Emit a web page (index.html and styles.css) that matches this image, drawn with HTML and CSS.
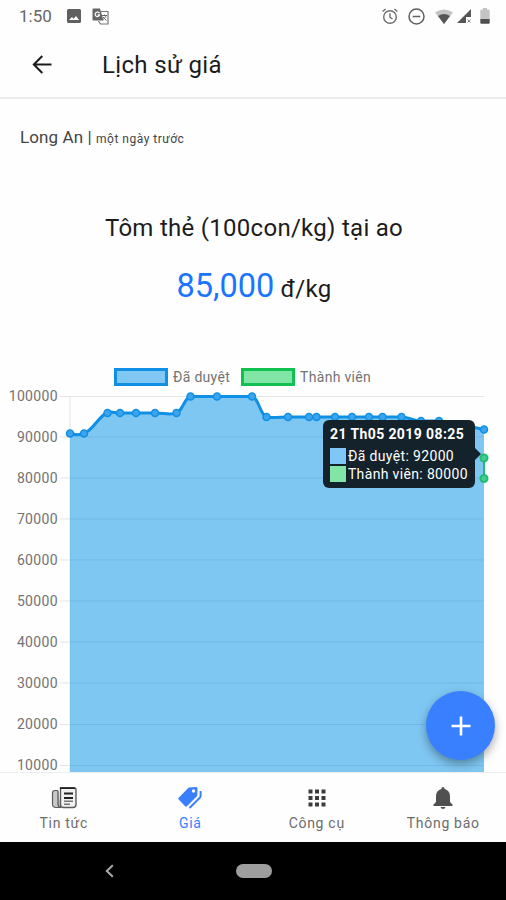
FILE: index.html
```html
<!DOCTYPE html>
<html lang="vi">
<head>
	<meta charset="utf-8">
	<title>Lịch sử giá</title>
	<link rel="stylesheet" href="styles.css">
</head>
<body>
	<div class="status-bar">
		<span class="clock">1:50</span>
		<svg class="icon-image" width="14" height="14" viewBox="0 0 14 14">
			<path fill="#606060" fill-rule="evenodd" d="M1.500 0h11A1.500 1.500 0 0 1 14 1.500v11a1.500 1.500 0 0 1-1.500 1.500h-11A1.500 1.500 0 0 1 0 12.500v-11A1.500 1.500 0 0 1 1.500 0zM2 11h10L9 7 6.700 9.700 5 8z"/>
		</svg>
		<svg class="icon-translate" width="17" height="17" viewBox="0 0 17 17">
			<path fill="none" stroke="#777" stroke-width="1.200" d="M9 3.500h7v12.500H8.500l-2-3"/>
			<path fill="#666" d="M1.500.5h6.500l3.500 12H1.500a1 1 0 0 1-1-1v-10a1 1 0 0 1 1-1z"/>
			<path fill="none" stroke="#fff" stroke-width="1.200" d="M7.500 5.200A2.300 2.300 0 1 0 7.300 7.700V6.800H5.500"/>
			<path fill="none" stroke="#666" d="M10 7.500h5M12.500 6.500v1M14 7.500c-.5 2-2 3.500-3.500 4.500M11 9l3.500 3.500"/>
		</svg>
		<div class="status-right">
			<svg width="16" height="17" viewBox="0 0 16 17" fill="none" stroke="#6e6e6e" stroke-width="1.400">
				<circle cx="8" cy="9" r="6.300"/>
				<path d="M8 5.300V9.300l2.500 1.700M.6 3.500l3-2.500M15.400 3.500l-3-2.500"/>
			</svg>
			<svg class="icon-dnd" width="17" height="17" viewBox="0 0 17 17" fill="none" stroke="#606060" stroke-width="1.500">
				<circle cx="8.500" cy="8.500" r="7.500"/>
				<path d="M4.700 8.500h7.600"/>
			</svg>
			<svg class="icon-wifi" width="18" height="15" viewBox="0 0 18 15">
				<path fill="#c4c4c4" d="M0 3.500Q9-2.500 18 3.500L9 15z"/>
				<path fill="#555" d="M3 7Q9 3 15 7L9 15z"/>
			</svg>
			<svg class="icon-signal" width="14" height="14" viewBox="0 0 14 14">
				<path fill="#555" d="M14 0v8H9v6H0z"/>
				<path fill="none" stroke="#888" d="M10.500 10.500l3 3M13.500 10.500l-3 3"/>
			</svg>
			<svg class="icon-battery" width="10" height="16" viewBox="0 0 10 16">
				<path fill="#c4c4c4" d="M3 0h4v1.500h1.500A1.200 1.200 0 0 1 9.700 2.700V11H.3V2.700A1.200 1.200 0 0 1 1.500 1.500H3z"/>
				<path fill="#505050" d="M.3 11h9.400v3.800a1 1 0 0 1-1 1H1.300a1 1 0 0 1-1-1z"/>
			</svg>
		</div>
	</div>

	<header class="toolbar">
		<svg width="20" height="19" viewBox="0 0 20 19" fill="none" stroke="#1c1c1c" stroke-width="2">
			<path d="M19.500 9.500H2M10.300 1L1.800 9.500l8.500 8.500"/>
		</svg>
		<h1>Lịch sử giá</h1>
	</header>

	<main class="content">
		<p class="place">Long An | <small>một ngày trước</small></p>
		<h2>Tôm thẻ (100con/kg) tại ao</h2>
		<p class="price"><strong>85,000</strong> đ/kg</p>

		<div class="legend">
			<i class="box approved"></i><span class="legend-approved">Đã duyệt</span>
			<i class="box member"></i><span class="legend-member">Thành viên</span>
		</div>

		<div class="chart">
			<svg width="506" height="386" viewBox="0 0 506 386">
				<g class="grid">
					<path d="M60 9.500H484M60 50H484M60 91H484M60 132H484M60 173H484M60 214H484M60 255H484M60 296H484M60 337.500H484M60 378.500H484M70 9V386"/>
				</g>
				<path class="area" d="M70 46.500C75 48 80 48 84 46.500C93 43 99 29 107.500 25.500C111 24 115 26 120 26H155C163 26 171 28.500 176.500 26C183 23 184 12 190 9.500H252C259 11 260 28 266.500 30C272 31.500 281 30 288 30H401C409 30 413 34 421 34H439C455 35 470 40 484 42.500V386H70z"/>
				<path class="line" d="M70 46.500C75 48 80 48 84 46.500C93 43 99 29 107.500 25.500C111 24 115 26 120 26H155C163 26 171 28.500 176.500 26C183 23 184 12 190 9.500H252C259 11 260 28 266.500 30C272 31.500 281 30 288 30H401C409 30 413 34 421 34H439C455 35 470 40 484 42.500"/>
				<g class="points">
					<circle cx="70" cy="46.500" r="3.500"/>
					<circle cx="84" cy="46.500" r="3.500"/>
					<circle cx="107.500" cy="26" r="3.500"/>
					<circle cx="120" cy="26" r="3.500"/>
					<circle cx="136" cy="26" r="3.500"/>
					<circle cx="155" cy="26" r="3.500"/>
					<circle cx="176.500" cy="26" r="3.500"/>
					<circle cx="190.500" cy="9.500" r="3.500"/>
					<circle cx="217" cy="9.500" r="3.500"/>
					<circle cx="252" cy="9.500" r="3.500"/>
					<circle cx="266.500" cy="30" r="3.500"/>
					<circle cx="288" cy="30" r="3.500"/>
					<circle cx="309" cy="30" r="3.500"/>
					<circle cx="316.500" cy="30" r="3.500"/>
					<circle cx="335" cy="30" r="3.500"/>
					<circle cx="352" cy="30" r="3.500"/>
					<circle cx="369" cy="30" r="3.500"/>
					<circle cx="382.500" cy="30" r="3.500"/>
					<circle cx="401.500" cy="30" r="3.500"/>
					<circle cx="421" cy="34" r="3.500"/>
					<circle cx="439" cy="34" r="3.500"/>
					<circle cx="484" cy="42.500" r="3.500"/>
				</g>
				<g class="member-points">
					<path d="M484 71V91.500"/>
					<circle cx="484" cy="71" r="3.500"/>
					<circle cx="484" cy="91.500" r="3.500"/>
				</g>
				<g class="labels">
					<text x="58" y="14">100000</text>
					<text x="58" y="55">90000</text>
					<text x="58" y="96">80000</text>
					<text x="58" y="137">70000</text>
					<text x="58" y="178">60000</text>
					<text x="58" y="219">50000</text>
					<text x="58" y="260">40000</text>
					<text x="58" y="301">30000</text>
					<text x="58" y="342">20000</text>
					<text x="58" y="383">10000</text>
				</g>
			</svg>
			<div class="tooltip">
				<b>21 Th05 2019 08:25</b>
				<div><i class="blue"></i><span>Đã duyệt: 92000</span></div>
				<div><i class="green"></i><span>Thành viên: 80000</span></div>
			</div>
		</div>
		<button class="add" aria-label="Thêm">
			<svg width="20" height="20" viewBox="0 0 20 20"><path stroke="#fff" stroke-width="2.600" d="M10 .5v19M.5 10h19"/></svg>
		</button>
	</main>

	<nav class="tabs">
		<a class="tab">
			<svg width="26" height="22" viewBox="0 0 26 22" fill="none" stroke="#5c5c5c">
				<path fill="#c9c9c9" stroke-width="1.200" d="M7 3.500H4Q1.500 3.500 1.500 6v11Q1.500 20.500 5 20.500h5"/>
				<path stroke-width="1.300" d="M7 4v13q0 3 3 3.500"/>
				<path fill="#f2f2f2" stroke-width="1.400" d="M9.500 1h14Q25 1 25 3v14.500Q25 20.500 22 20.500H12.500Q9.500 20.500 9.500 17.500z"/>
				<path stroke="#222" stroke-width="1.800" d="M9 1.200h15M13 6.500h9M13 11h9"/>
				<path stroke="#777" stroke-width="1.500" d="M13 14.200h9M13 17.200h6"/>
			</svg>
			<span>Tin tức</span>
		</a>
		<a class="tab active">
			<svg width="24" height="22" viewBox="0 0 24 22">
				<path fill="#3880ff" fill-rule="evenodd" d="M11 .6L18 0q1.500 0 1.500 1.500L19.300 8q0 .8-.6 1.400L8.900 19.200q-.9.900-1.800 0L.7 12.500q-.9-.9 0-1.800L10 1.200q.4-.5 1-.6zM15.500 2.300a1.700 1.700 0 1 0 0 3.400 1.700 1.700 0 0 0 0-3.400z"/>
				<path fill="none" stroke="#3880ff" stroke-width="2" d="M22.600 4V9q0 1-.8 1.800L11.500 21"/>
			</svg>
			<span>Giá</span>
		</a>
		<a class="tab">
			<svg width="18" height="22" viewBox="0 0 18 22" fill="#3c3c3c">
				<path d="M.5 2.500h4v4h-4zM7 2.500h4v4H7zM13.500 2.500h4v4h-4zM.5 9h4v4h-4zM7 9h4v4H7zM13.500 9h4v4h-4zM.5 15.500h4v4h-4zM7 15.500h4v4H7zM13.500 15.500h4v4h-4z"/>
			</svg>
			<span>Công cụ</span>
		</a>
		<a class="tab">
			<svg width="20" height="22" viewBox="0 0 20 22" fill="#505050">
				<path d="M10 0q1.600 0 1.600 2C15 3 17 5.500 17 9v6l2.500 2.500V19H.5v-1.500L3 15V9c0-3.500 2-6 5.400-7Q8.400 0 10 0zM7.500 20h5q-.5 2-2.500 2t-2.500-2z"/>
			</svg>
			<span>Thông báo</span>
		</a>
	</nav>

	<div class="system-bar">
		<svg width="9" height="14" viewBox="0 0 9 14" fill="none" stroke="#aaa" stroke-width="2"><path d="M7.800 1.200L1.800 7l6 5.800"/></svg>
		<div class="home"></div>
	</div>
</body>
</html>
```
FILE: styles.css
```css
* {
	box-sizing: border-box;
}

body {
	margin: 0;
	height: 900px;
	display: flex;
	flex-direction: column;
	overflow: hidden;
	background-color: #fefefe;
	font-family: Roboto, sans-serif;
	color: #1c1c1c;
}

h1, h2, p {
	margin: 0;
	font-weight: normal;
}

svg {
	display: block;
	flex: none;
}

.status-bar {
	display: flex;
	align-items: center;
	height: 32px;
	padding: 0 16px 0 19px;
}

.clock {
	width: 48px;
	font-size: 17px;
	color: #666;
}

.icon-translate {
	margin-left: 11px;
}

.status-right {
	display: flex;
	align-items: center;
	margin-left: auto;
}

.icon-dnd {
	margin-left: 10px;
}

.icon-wifi {
	margin-left: 10px;
}

.icon-signal {
	margin-left: 4px;
}

.icon-battery {
	margin-left: 9px;
}

.toolbar {
	display: flex;
	align-items: center;
	height: 67px;
	padding-left: 32px;
	border-bottom: 2px solid #ededed;
}

.toolbar h1 {
	margin-left: 50px;
	font-size: 24px;
	line-height: 30px;
	letter-spacing: 0.35px;
}

.content {
	position: relative;
	height: 673px;
	overflow: hidden;
}

.place {
	padding: 28px 20px 0;
	font-size: 17px;
	line-height: 20px;
	letter-spacing: 0.1px;
	color: #444;
}

.place small {
	font-size: 12px;
	letter-spacing: 0.5px;
}

.content h2 {
	margin-top: 64px;
	padding-left: 2px;
	text-align: center;
	font-size: 24px;
	line-height: 30px;
	letter-spacing: 0.28px;
}

.price {
	margin-top: 22px;
	padding-left: 2px;
	text-align: center;
	font-size: 24px;
	line-height: 42px;
	letter-spacing: 0.3px;
}

.price strong {
	font-size: 32.5px;
	font-weight: normal;
	letter-spacing: 0;
	color: #1a75ff;
}

.legend {
	display: flex;
	align-items: center;
	height: 20px;
	margin-top: 57px;
	padding-left: 114px;
	font-size: 14px;
	letter-spacing: 0.3px;
	color: #737373;
}

.box {
	width: 54px;
	height: 18px;
	margin-right: 5px;
	border: 3px solid #1090e5;
	background-color: #80c7f3;
}

.box.member {
	margin-left: 11px;
	border-color: #10c050;
	background-color: #80e5a5;
}

.chart {
	position: relative;
	height: 386px;
}

.grid path {
	fill: none;
	stroke: #e5e5e5;
}

.area {
	fill: rgba(0, 144, 232, 0.5);
}

.line {
	fill: none;
	stroke: #1090e5;
	stroke-width: 3;
}

.points circle {
	fill: #3ca4ec;
	stroke: #1090e5;
	stroke-width: 1.5;
}

.member-points {
	fill: #48cb91;
	stroke: #1dbd72;
	stroke-width: 2;
}

.labels text {
	font-size: 14px;
	letter-spacing: 0.35px;
	text-anchor: end;
	fill: #737373;
}

.tooltip {
	position: absolute;
	left: 323px;
	top: 33px;
	width: 152px;
	height: 68px;
	padding: 5px 7px;
	border-radius: 6px;
	background-color: #14222c;
	color: #fff;
	font-size: 14px;
	line-height: 18px;
	letter-spacing: 0.35px;
}

.tooltip::after {
	content: "";
	position: absolute;
	left: 152px;
	top: 28px;
	border: 6px solid transparent;
	border-left-color: #14222c;
	border-right: 0;
}

.tooltip b {
	display: block;
	margin-bottom: 4px;
	white-space: nowrap;
	letter-spacing: 0.4px;
}

.tooltip div {
	display: flex;
	align-items: center;
	height: 18px;
	white-space: nowrap;
}

.tooltip i {
	width: 16px;
	height: 16px;
	margin-right: 2px;
	background-color: #80c7f8;
}

.tooltip .green {
	background-color: #80e5a5;
}

.add {
	position: absolute;
	right: 11px;
	bottom: 12px;
	width: 69px;
	height: 69px;
	display: flex;
	align-items: center;
	justify-content: center;
	border: none;
	border-radius: 50%;
	background-color: #3880ff;
	box-shadow: 0 4px 10px rgba(0, 0, 0, 0.35);
}

.tabs {
	display: flex;
	height: 70px;
	border-top: 1px solid #ededed;
	background-color: #fefefe;
}

.tab {
	flex: 1;
	display: flex;
	flex-direction: column;
	align-items: center;
	padding: 14px 0 0 1px;
	font-size: 14px;
	line-height: 18px;
	letter-spacing: 0.7px;
	color: #6c6c6c;
}

.tab span {
	margin-top: 5px;
}

.tab.active {
	color: #3880ff;
}

.system-bar {
	display: flex;
	align-items: center;
	height: 58px;
	padding-left: 105px;
	background-color: #000;
}

.home {
	width: 36px;
	height: 14px;
	margin-left: 122px;
	border-radius: 7px;
	background-color: #9e9e9e;
}
```
